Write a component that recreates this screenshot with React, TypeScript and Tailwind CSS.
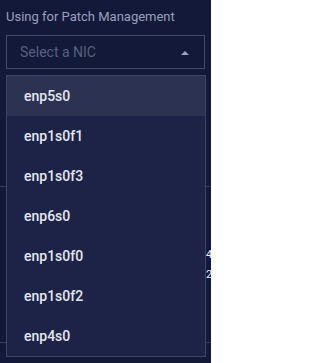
import * as React from "react";

const nics = ["enp5s0", "enp1s0f1", "enp1s0f3", "enp6s0", "enp1s0f0", "enp1s0f2", "enp4s0"];

export default function App() {
    const [active] = React.useState(0);

    return (
        <div className="relative w-[211px] h-[363px] overflow-hidden bg-[#131938] font-['Roboto',sans-serif]">
            <div className="pt-[9px] px-[6px]">
                <label className="block text-[13px] leading-[15px] text-[#9aa0bd]">Using for Patch Management</label>
                <div className="mt-[11px] h-[34px] border border-[#434b6c] flex items-center justify-between pl-[13px] pr-[15px]">
                    <span className="text-[14px] text-[#58607f]">Select a NIC</span>
                    <svg width="8" height="5" viewBox="0 0 8 5">
                        <path d="M0 5 L4 1 L8 5 Z" fill="#9aa2c4"/>
                    </svg>
                </div>
            </div>

            {/* content behind the open menu */}
            <div className="h-[118px] border-b border-[#343c5d]"/>
            <div className="pt-[58px] pl-[206px] text-[11px] leading-[20px] text-[#eef0f8] whitespace-nowrap">
                <div>4</div>
                <div>2</div>
            </div>
            <div className="h-[58px] border-b border-[#343c5d]"/>

            <ul className="absolute top-[75px] left-[6px] w-[200px] border border-[#3d4566] bg-[#1c2347]">
                {nics.map((nic, i) => (
                    <li
                        key={nic}
                        className={`h-[40px] flex items-center pl-[17px] text-[14px] font-medium text-[#e4e6ef] ${i === active ? "bg-[#2c3252]" : ""}`}
                    >
                        {nic}
                    </li>
                ))}
            </ul>
        </div>
    );
}
